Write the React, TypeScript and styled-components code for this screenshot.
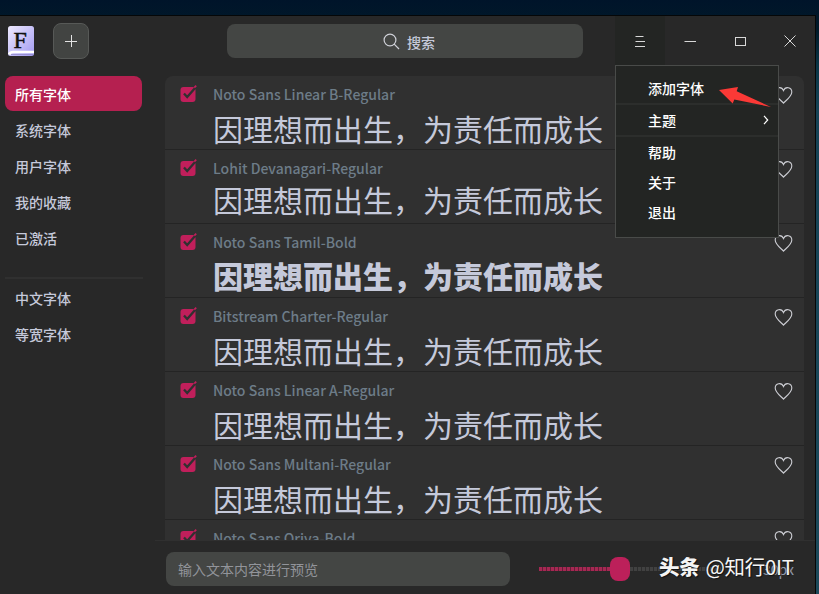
import React from "react";
import styled, { createGlobalStyle } from "styled-components";

const GlobalStyle = createGlobalStyle`
  * { box-sizing: border-box; }
  html, body { margin: 0; padding: 0; overflow: hidden; }
  body {
    font-family: "Noto Sans CJK SC", "Noto Sans", sans-serif;
    font-size: 14px;
    font-weight: 500;
    color: #c5c9da;
  }
  button, input { font: inherit; color: inherit; border: 0; background: none; padding: 0; margin: 0; }
`;

const Desktop = styled.div`
  width: 819px;
  height: 594px;
  padding: 15px 3px 0 0;
  overflow: hidden;
  background: linear-gradient(180deg, #00142a 0, #011a29 30px, #0a3546 65px, #164356 110px, #1d4a5b 594px);
  background-color: #00142a;
`;

const Window = styled.div`
  position: relative;
  height: 579px;
  display: flex;
  flex-direction: column;
  border-top: 1px solid #050708;
  border-right: 1px solid #050708;
  background: #282828;
`;

const TitleBar = styled.header`
  display: flex;
  height: 50px;
  flex: none;
  padding-left: 8px;
`;

const Logo = styled.svg`
  flex: none;
  width: 26px;
  height: 30px;
  margin-top: 10px;
`;

const AddButton = styled.button`
  display: grid;
  place-items: center;
  width: 36px;
  height: 36px;
  margin: 7px 0 0 19px;
  border: 1px solid #575957;
  border-radius: 8px;
  background: #424442;
`;

const SearchBox = styled.div`
  display: flex;
  align-items: center;
  width: 356px;
  height: 34px;
  margin: 8px 0 0 138px;
  padding-left: 156px;
  gap: 7px;
  border-radius: 8px;
  background: #444644;
  line-height: 20px;
`;

const SearchLabel = styled.span`
  padding-top: 1px;
`;

const WindowControls = styled.div`
  display: flex;
  margin-left: 32px;
`;

const ControlButton = styled.button<{ $active?: boolean }>`
  display: grid;
  place-items: center;
  width: 50px;
  height: 50px;
  background: ${(p) => (p.$active ? "#232523" : "transparent")};
`;

const Body = styled.div`
  display: flex;
  flex: 1;
  min-height: 0;
`;

const Sidebar = styled.nav`
  width: 155px;
  flex: none;
  padding: 10px 0 0 5px;
`;

const SideItem = styled.div<{ $selected?: boolean }>`
  width: 137px;
  height: 35px;
  margin-bottom: 1px;
  padding-left: 10px;
  line-height: 36px;
  border-radius: 8px;
  color: ${(p) => (p.$selected ? "#ffffff" : "#c5c9da")};
  background: ${(p) => (p.$selected ? "#b52050" : "transparent")};
`;

const SideDivider = styled.div`
  width: 138px;
  height: 2px;
  margin: 22px 0 1px;
  background: #303030;
`;

const Main = styled.main`
  flex: 1;
  display: flex;
  flex-direction: column;
  min-width: 0;
`;

const ListArea = styled.div`
  height: 474px;
  flex: none;
  padding: 10px 11px 0 10px;
  overflow: hidden;
`;

const FontList = styled.div`
  border-radius: 8px 8px 0 0;
  background: #303030;
`;

const FontRow = styled.article`
  display: flex;
  height: 74px;
  padding-left: 15px;
  border-bottom: 1px solid #242424;
`;

const CheckIcon = styled.svg`
  flex: none;
  width: 18px;
  height: 18px;
  margin-top: 9px;
`;

const FontInfo = styled.div`
  flex: 1;
  min-width: 0;
  padding: 8px 0 0 15px;
`;

const FontName = styled.div`
  height: 21px;
  line-height: 21px;
  color: #6d7c88;
  white-space: nowrap;
`;

const Preview = styled.div<{ $gap: number; $bold?: boolean }>`
  margin-top: ${(p) => p.$gap}px;
  height: 44px;
  line-height: 44px;
  font-size: 30px;
  font-weight: ${(p) => (p.$bold ? 900 : 400)};
  white-space: nowrap;
`;

const HeartIcon = styled.svg`
  flex: none;
  width: 19px;
  height: 19px;
  margin: 10px 11px 0 0;
`;

const Footer = styled.footer`
  position: relative;
  display: flex;
  flex: 1;
  padding: 11px 15px 0 11px;
  border-top: 1px solid #303030;
`;

const PreviewInput = styled.input`
  width: 344px;
  height: 34px;
  padding: 0 12px;
  border-radius: 8px;
  background: #444644;
  font-weight: 400;
  outline: none;
  &::placeholder { color: #92949a; opacity: 1; }
`;

const Slider = styled.div`
  display: flex;
  align-items: center;
  width: 182px;
  height: 34px;
  margin-left: 29px;
`;

const Track = styled.div<{ $filled?: boolean }>`
  width: ${(p) => (p.$filled ? 71 : 91)}px;
  height: 4px;
  background: repeating-linear-gradient(
    90deg,
    ${(p) => (p.$filled ? "#a62853" : "#414141")} 0 3px,
    ${(p) => (p.$filled ? "#651d36" : "#2d2d2d")} 3px 4px
  );
`;

const Handle = styled.div`
  width: 20px;
  height: 24px;
  flex: none;
  border-radius: 8px;
  background: #bc205a;
`;

const SizeLabel = styled.span`
  margin: 7px 0 0 40px;
  line-height: 20px;
  font-weight: 400;
  margin-left: 42px;
  color: #8f9bb0;
`;

const Watermark = styled.div`
  position: absolute;
  left: 504px;
  top: 9px;
  line-height: 32px;
  font-size: 20.5px;
  font-weight: 400;
  letter-spacing: -0.3px;
  color: #f5f5f5;
  white-space: nowrap;
  text-shadow: 1px 1px 1px #111;
`;

const WatermarkBrand = styled.span`
  font-weight: 900;
  margin-right: 6px;
`;

const Menu = styled.div`
  position: absolute;
  left: 615px;
  top: 49px;
  width: 164px;
  height: 173px;
  padding-top: 7px;
  border: 1px solid #494b49;
  background: #232523;
  color: #ffffff;
`;

const MenuItem = styled.div`
  display: flex;
  align-items: center;
  justify-content: space-between;
  height: 30px;
  padding: 0 9px 0 32px;
  line-height: 30px;
`;

const MenuDivider = styled.div`
  height: 2px;
  background: #2c2e2c;
`;

const Arrow = styled.svg`
  position: absolute;
  left: 102px;
  top: 19px;
  width: 54px;
  height: 24px;
`;

const categories = ["所有字体", "系统字体", "用户字体", "我的收藏", "已激活"];
const subsets = ["中文字体", "等宽字体"];

const fonts = [
  { name: "Noto Sans Linear B-Regular", gap: 1 },
  { name: "Lohit Devanagari-Regular", gap: -2 },
  { name: "Noto Sans Tamil-Bold", gap: 0, bold: true },
  { name: "Bitstream Charter-Regular", gap: 1 },
  { name: "Noto Sans Linear A-Regular", gap: 1 },
  { name: "Noto Sans Multani-Regular", gap: 1 },
  { name: "Noto Sans Oriya-Bold", gap: 1 },
];

const Checkmark = () => (
  <CheckIcon viewBox="0 0 18 18">
    <rect x="0.5" y="2" width="15" height="15" rx="3" fill="#c01f5b" />
    <path d="M4 8.4L7.2 12 L15.5 2.4" fill="none" stroke="#303030" strokeWidth="2.3" />
    <path d="M14.3 2.7L16.2 .7" stroke="#c01f5b" strokeWidth="1.7" />
  </CheckIcon>
);

const Heart = () => (
  <HeartIcon viewBox="0 0 19 19" fill="none" stroke="#cdced4" strokeWidth="1.1">
    <path d="M9.5 17.2C7.5 14.8 1.2 10.3 1.2 5.9C1.2 1.2 7.6-.2 9.5 4.6C11.4-.2 17.8 1.2 17.8 5.9C17.8 10.3 11.5 14.8 9.5 17.2Z" />
  </HeartIcon>
);

export default function App() {
  return (
    <>
      <GlobalStyle />
      <Desktop>
        <Window>
          <TitleBar>
            <Logo viewBox="0 0 26 30">
              <defs>
                <linearGradient id="logoFill" x1="0" y1="0" x2="1" y2="1">
                  <stop offset="0" stopColor="#eeeaff" />
                  <stop offset="1" stopColor="#a29af2" />
                </linearGradient>
              </defs>
              <rect width="26" height="30" rx="2.5" fill="url(#logoFill)" />
              <path d="M1 28.5Q2 26 5 26H26" fill="none" stroke="#ffffff" strokeWidth="2.6" />
              <path d="M3 28.6H25" stroke="#8b83c4" strokeWidth="0.8" />
              <text x="5.6" y="21.6" fontFamily="Liberation Serif, serif" fontSize="24" fontWeight="400" fill="#111" stroke="#111" strokeWidth=".5">F</text>
            </Logo>
            <AddButton aria-label="添加">
              <svg width="12" height="12" stroke="#e3e3e3" strokeWidth="1">
                <path d="M0 6.5H12M6.5 0V12" />
              </svg>
            </AddButton>
            <SearchBox>
              <svg width="17" height="17" fill="none" stroke="#cfd1d8" strokeWidth="1.2">
                <circle cx="7" cy="7" r="5.9" />
                <path d="M11.2 11.2L16 16" />
              </svg>
              <SearchLabel>搜索</SearchLabel>
            </SearchBox>
            <WindowControls>
              <ControlButton $active aria-label="菜单">
                <svg width="12" height="12" stroke="#d8d8d8">
                  <path d="M1.5 1.5H9.5M1.5 6.5H11M1 11.5H11" transform="translate(0 -.0)" />
                </svg>
              </ControlButton>
              <ControlButton aria-label="最小化">
                <svg width="12" height="12" stroke="#d8d8d8"><path d="M.5 6.5H12" /></svg>
              </ControlButton>
              <ControlButton aria-label="最大化">
                <svg width="12" height="12" fill="none" stroke="#d8d8d8"><rect x="1.5" y="2.5" width="10" height="8" /></svg>
              </ControlButton>
              <ControlButton aria-label="关闭">
                <svg width="12" height="12" stroke="#d8d8d8"><path d="M.5 .5L11.5 11.5M11.5 .5L.5 11.5" /></svg>
              </ControlButton>
            </WindowControls>
          </TitleBar>

          <Body>
            <Sidebar>
              {categories.map((label, i) => (
                <SideItem key={label} $selected={i === 0}>{label}</SideItem>
              ))}
              <SideDivider />
              {subsets.map((label) => (
                <SideItem key={label}>{label}</SideItem>
              ))}
            </Sidebar>
            <Main>
              <ListArea>
                <FontList>
                  {fonts.map((font) => (
                    <FontRow key={font.name}>
                      <Checkmark />
                      <FontInfo>
                        <FontName>{font.name}</FontName>
                        <Preview $gap={font.gap} $bold={font.bold}>因理想而出生，为责任而成长</Preview>
                      </FontInfo>
                      <Heart />
                    </FontRow>
                  ))}
                </FontList>
              </ListArea>
              <Footer>
                <PreviewInput placeholder="输入文本内容进行预览" />
                <Slider>
                  <Track $filled />
                  <Handle />
                  <Track />
                </Slider>
                <SizeLabel>30px</SizeLabel>
                <Watermark>
                  <WatermarkBrand>头条</WatermarkBrand>@知行0IT
                </Watermark>
              </Footer>
            </Main>
          </Body>

          <Menu>
            <MenuItem>添加字体</MenuItem>
            <MenuDivider />
            <MenuItem>
              主题
              <svg width="6" height="10" fill="none" stroke="#ffffff" strokeWidth="1.2"><path d="M1 .8L4.7 5L1 9.2" /></svg>
            </MenuItem>
            <MenuDivider />
            <MenuItem>帮助</MenuItem>
            <MenuItem>关于</MenuItem>
            <MenuItem>退出</MenuItem>
            <Arrow viewBox="0 0 54 24">
              <path d="M1 5L20 2L18.7 6.3L53 22L16.3 14.5L14.7 18.5Z" fill="#fb3936" />
            </Arrow>
          </Menu>
        </Window>
      </Desktop>
    </>
  );
}
